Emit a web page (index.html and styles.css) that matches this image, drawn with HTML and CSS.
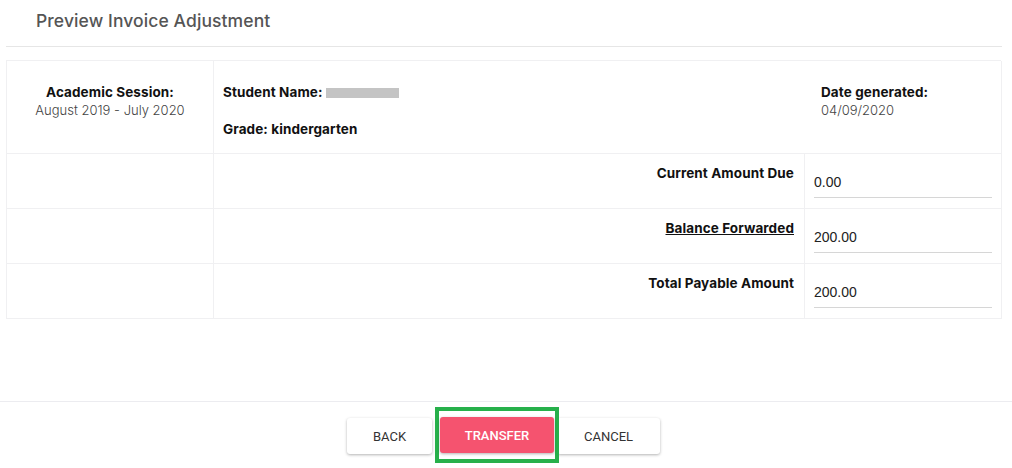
FILE: index.html
```html
<!DOCTYPE html>
<html>
<head>
<meta charset="utf-8">
<link rel="stylesheet" href="styles.css">
</head>
<body>
<div class="page">
  <div class="header">
    <h1 class="title">Preview Invoice Adjustment</h1>
  </div>
  <div class="sheet">
    <div class="cell c-session">
      <div class="lbl">Academic Session:</div>
      <div class="val">August 2019 - July 2020</div>
    </div>
    <div class="cell c-info">
      <div class="student">
        <div class="lbl">Student Name:<span class="redact"></span></div>
        <div class="lbl grade">Grade: kindergarten</div>
      </div>
      <div class="date">
        <div class="lbl">Date generated:</div>
        <div class="val">04/09/2020</div>
      </div>
    </div>

    <div class="cell"></div>
    <div class="cell c-label"><span class="lbl">Current Amount Due</span></div>
    <div class="cell c-input"><div class="field">0.00</div></div>

    <div class="cell"></div>
    <div class="cell c-label"><span class="lbl link">Balance Forwarded</span></div>
    <div class="cell c-input"><div class="field">200.00</div></div>

    <div class="cell"></div>
    <div class="cell c-label"><span class="lbl">Total Payable Amount</span></div>
    <div class="cell c-input"><div class="field">200.00</div></div>
  </div>
  <div class="spacer"></div>
  <div class="footer">
    <button class="btn back">BACK</button>
    <div class="highlight"><button class="btn primary">TRANSFER</button></div>
    <button class="btn cancel">CANCEL</button>
  </div>
</div>
</body>
</html>
```

FILE: styles.css
```css
* { box-sizing: border-box; }
html, body { margin: 0; padding: 0; background: #fff; }
body {
  font-family: "Inter", "Noto Sans", sans-serif;
  color: #111;
  width: 1012px;
  height: 468px;
  overflow: hidden;
}
.page { display: flex; flex-direction: column; height: 468px; }
.header {
  margin: 0 10px 0 6px;
  height: 47px;
  border-bottom: 1px solid #e6e6e6;
  padding: 10px 0 0 30px;
}
.title {
  margin: 0;
  font-size: 17.5px;
  font-weight: 500;
  color: #555;
  letter-spacing: 0.1px;
}
.sheet {
  margin: 13px 11px 0 6px;
  display: grid;
  grid-template-columns: 207px 591px 197px;
  grid-template-rows: 93px 55px 55px 55px;
  border-top: 1px solid #f0f0f2;
  border-left: 1px solid #f0f0f2;
}
.cell {
  border-right: 1px solid #f0f0f2;
  border-bottom: 1px solid #f0f0f2;
}
.lbl { font-size: 13.5px; font-weight: 700; color: #111; letter-spacing: 0.1px; }
.val { font-size: 13px; font-weight: 300; color: #444; margin-top: 2px; }
.c-session { text-align: center; padding-top: 23px; }
.c-info {
  grid-column: span 2;
  display: flex;
  padding: 23px 0 0 9px;
}
.student { flex: 1; }
.grade { margin-top: 21px; }
.date { width: 180px; }
.redact {
  display: inline-block;
  width: 73px;
  height: 10px;
  background: #c4c4c4;
  vertical-align: -1px;
  margin-left: 3px;
}
.c-label { text-align: right; padding: 8px 10px 0 0; }
.link { text-decoration: underline; }
.c-input { padding: 17px 9px 0 9px; }
.field {
  font-family: "Liberation Sans", Arial, sans-serif;
  font-size: 14px;
  color: #222;
  height: 27px;
  border-bottom: 1px solid #d6d6d6;
  padding-top: 3px;
}
.spacer { flex: 1; }
.footer {
  height: 67px;
  border-top: 1px solid #ececf0;
  display: flex;
  justify-content: center;
  align-items: flex-start;
  padding-top: 5px;
  padding-right: 5px;
}
.btn {
  font-family: "Roboto", sans-serif;
  font-size: 13px;
  color: #333;
  background: #fff;
  border: none;
  border-radius: 3px;
  box-shadow: 0 1px 3px rgba(0,0,0,0.3);
  height: 36px;
  margin: 11px 0 0 0;
  padding: 0;
  cursor: pointer;
}
.back { width: 85px; margin-right: 3px; }
.cancel { width: 103px; margin-left: -2px; }
.highlight {
  border: 4px solid #27b04b;
  padding: 6px 1px;
  position: relative;
  z-index: 1;
}
.primary {
  margin: 0;
  width: 114px;
  background: #f5536f;
  color: #fff;
  font-weight: 500;
  display: block;
}
```
